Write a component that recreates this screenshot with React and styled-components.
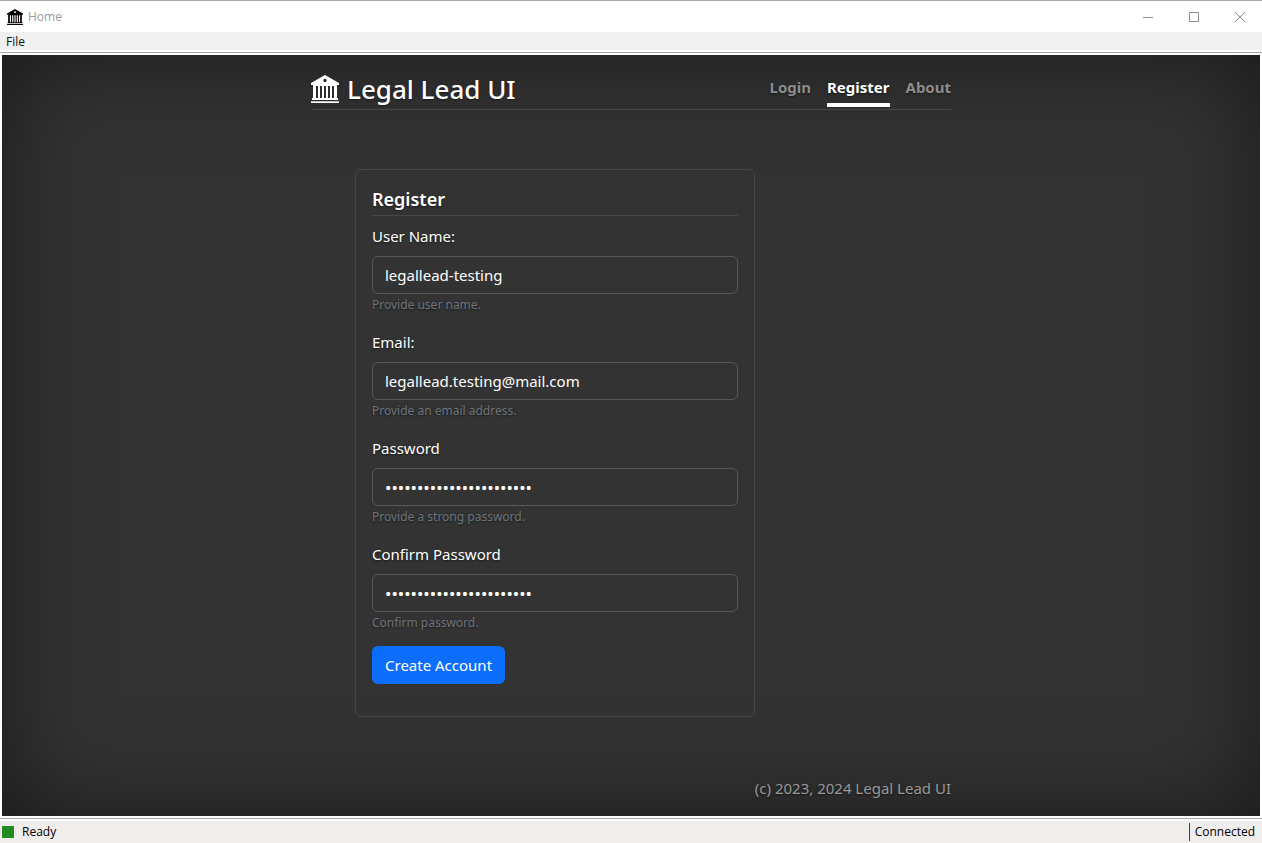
import React from "react";
import styled, { createGlobalStyle } from "styled-components";

const GlobalStyle = createGlobalStyle`
  *, *::before, *::after { box-sizing: border-box; }
  body {
    margin: 0;
    background: #fff;
    font-family: "Noto Sans", "Open Sans", sans-serif;
  }
`;

const Window = styled.div`
  display: flex;
  flex-direction: column;
  min-height: 100vh;
  padding-top: 1px;
  border-top: 1px solid #a6a6a6;
  font-family: "Open Sans", "Noto Sans", sans-serif;
  font-size: 12px;
  line-height: 16px;
`;

const TitleBar = styled.header`
  display: flex;
  align-items: center;
  height: 30px;
  padding-left: 7px;
  gap: 5px;
  color: #999;
`;

const BankIcon = styled.svg`
  flex: none;
  width: ${(p) => p.$size}px;
  height: ${(p) => p.$size}px;
  fill: ${(p) => p.$color};
`;

const Title = styled.span`
  flex: 1;
`;

const CaptionButton = styled.button`
  display: grid;
  place-items: center;
  width: 44px;
  height: 28px;
  margin-left: -3px;
  padding: 0;
  border: 0;
  background: none;
  color: #8f8f8f;
`;

const MenuBar = styled.nav`
  height: 18px;
  padding: 0 4px;
  background: #f0f0f0;
`;

const MenuItem = styled.button`
  display: block;
  height: 18px;
  padding: 2px 2px 0;
  border: 0;
  background: none;
  color: #111;
  font: inherit;
`;

const Frame = styled.div`
  flex: 1;
  display: flex;
  margin: 2px 0;
  padding: 2px;
  border: solid #a6a6a6;
  border-width: 1px 0;
`;

const Page = styled.div`
  flex: 1;
  display: flex;
  justify-content: center;
  background: #333;
  box-shadow: inset 0 0 100px rgba(0, 0, 0, 0.5);
  color: #fff;
  font-family: "Noto Sans", "Open Sans", sans-serif;
  font-size: 15px;
  line-height: 24px;
  text-shadow: 0 1px 2px rgba(0, 0, 0, 0.5);
`;

const Cover = styled.div`
  display: flex;
  flex-direction: column;
  width: 100%;
  max-width: 672px;
  padding: 16px;
`;

const Masthead = styled.div`
  display: flex;
  justify-content: space-between;
  align-items: flex-start;
  height: 39px;
  border-bottom: 1px solid #474747;
`;

const Brand = styled.h1`
  display: flex;
  align-items: center;
  gap: 8px;
  margin: 0;
  font-size: 26px;
  font-weight: 500;
  line-height: 36px;
`;

const Nav = styled.nav`
  display: flex;
  gap: 16px;
`;

const NavLink = styled.a`
  padding: 4px 0;
  border-bottom: 4px solid ${(p) => (p.$active ? "#fff" : "transparent")};
  color: ${(p) => (p.$active ? "#fff" : "#8c8c8c")};
  font-weight: 700;
  text-decoration: none;
`;

const Card = styled.form`
  width: 400px;
  max-width: 100%;
  margin: 59px 0 59px 44px;
  padding: 16px 16px 32px;
  border: 1px solid #454545;
  border-radius: 6px;
`;

const CardTitle = styled.h2`
  margin: 0 0 8px;
  padding-bottom: 2px;
  border-bottom: 1px solid #474747;
  font-size: 18px;
  font-weight: 600;
  line-height: 27px;
`;

const Field = styled.div`
  display: flex;
  flex-direction: column;
  margin-bottom: 14px;
`;

const Label = styled.label`
  margin-bottom: 8px;
`;

const Input = styled.input`
  height: 38px;
  padding: 6px 12px;
  border: 1px solid #585858;
  border-radius: 6px;
  background: #333;
  color: #fff;
  font: inherit;
  font-size: ${(p) => (p.type === "password" ? 17 : 15)}px;
`;

const Hint = styled.small`
  color: #6c757d;
  font-size: 12px;
  line-height: 22px;
`;

const Submit = styled.button`
  display: block;
  height: 38px;
  margin-top: -2px;
  padding: 0 13px;
  border: 0;
  border-radius: 6px;
  background: #0d6efd;
  color: #fff;
  font: inherit;
`;

const Footer = styled.footer`
  margin-top: auto;
  color: #999;
  text-align: right;
`;

const StatusBar = styled.footer`
  display: flex;
  align-items: center;
  justify-content: space-between;
  height: 22px;
  padding: 0 7px 0 2px;
  background: #f0eded;
  color: #000;
  line-height: 18px;
`;

const Ready = styled.span`
  display: flex;
  align-items: center;
  gap: 8px;
  &::before {
    content: "";
    width: 12px;
    height: 12px;
    background: #228b22;
  }
`;

const Connection = styled.span`
  padding-left: 5px;
  border-left: 1px solid #2f4550;
`;

const fields = [
  { id: "username", label: "User Name:", type: "text", value: "legallead-testing", hint: "Provide user name." },
  { id: "email", label: "Email:", type: "email", value: "legallead.testing@mail.com", hint: "Provide an email address." },
  { id: "password", label: "Password", type: "password", value: "legallead-testing-12345", hint: "Provide a strong password." },
  { id: "confirm", label: "Confirm Password", type: "password", value: "legallead-testing-12345", hint: "Confirm password." },
];

const captions = [
  { name: "Minimize", d: "M0 5.5h10" },
  { name: "Maximize", d: "M.5.5h9v9h-9z" },
  { name: "Close", d: "M0 0l10 10M10 0L0 10" },
];

function Bank({ size, color }) {
  return (
    <BankIcon viewBox="0 0 28 28" $size={size} $color={color} aria-hidden="true">
      <path
        fillRule="evenodd"
        d="M14 0L28 8v2h-2v13h1v2H1v-2h1V10H0V8zM14 3.8a1.7 1.7 0 1 0 0 3.4a1.7 1.7 0 1 0 0-3.4zM5 11v12h2V11zM9 11v12h2V11zM13 11v12h2V11zM17 11v12h2V11zM21 11v12h2V11z"
      />
      <path d="M0 26.3h28V28H0z" />
    </BankIcon>
  );
}

export default function App() {
  return (
    <>
      <GlobalStyle />
      <Window>
        <TitleBar>
          <Bank size={16} color="#000" />
          <Title>Home</Title>
          {captions.map((c) => (
            <CaptionButton key={c.name} type="button" aria-label={c.name}>
              <svg width="10" height="10" viewBox="0 0 10 10" fill="none" stroke="currentColor">
                <path d={c.d} />
              </svg>
            </CaptionButton>
          ))}
        </TitleBar>
        <MenuBar>
          <MenuItem type="button">File</MenuItem>
        </MenuBar>
        <Frame>
          <Page>
            <Cover>
              <Masthead>
                <Brand>
                  <Bank size={28} color="#fff" />
                  Legal Lead UI
                </Brand>
                <Nav>
                  <NavLink href="#login">Login</NavLink>
                  <NavLink href="#register" $active>Register</NavLink>
                  <NavLink href="#about">About</NavLink>
                </Nav>
              </Masthead>
              <Card onSubmit={(e) => e.preventDefault()}>
                <CardTitle>Register</CardTitle>
                {fields.map((f) => (
                  <Field key={f.id}>
                    <Label htmlFor={f.id}>{f.label}</Label>
                    <Input id={f.id} type={f.type} defaultValue={f.value} aria-describedby={`${f.id}-hint`} />
                    <Hint id={`${f.id}-hint`}>{f.hint}</Hint>
                  </Field>
                ))}
                <Submit type="submit">Create Account</Submit>
              </Card>
              <Footer>(c) 2023, 2024 Legal Lead UI</Footer>
            </Cover>
          </Page>
        </Frame>
        <StatusBar>
          <Ready>Ready</Ready>
          <Connection>Connected</Connection>
        </StatusBar>
      </Window>
    </>
  );
}
